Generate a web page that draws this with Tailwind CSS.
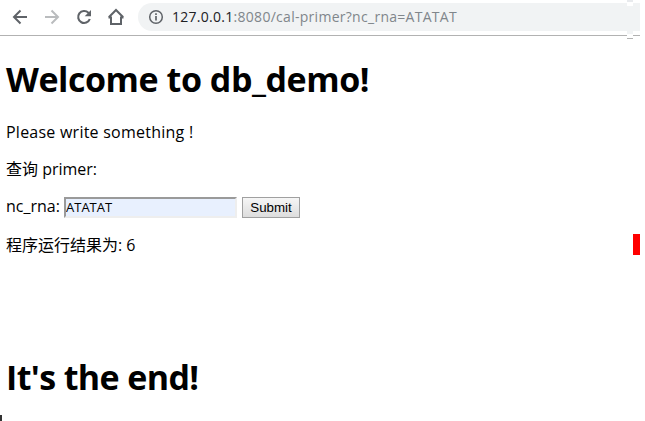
<!DOCTYPE html>
<html lang="zh">
<head>
<meta charset="utf-8">
<title>db_demo</title>
<script src="https://cdn.jsdelivr.net/npm/@tailwindcss/browser@4"></script>
</head>
<body class="relative flex h-[421px] w-[645px] flex-col overflow-hidden bg-white font-['Open_Sans','Noto_Sans_CJK_SC',sans-serif] text-base text-black">
<header class="flex h-9 w-[640px] shrink-0 items-start border-b border-[#b2b2b2] pt-[3px]">
  <nav class="flex h-7 w-[138px] shrink-0 items-center gap-3 pl-[10px] text-[#5f6368]">
    <svg class="size-5" viewBox="0 0 20 20" fill="none" stroke="currentColor" stroke-width="2"><path d="M17 10H4.5M10.5 3.5L4 10l6.500 6.500"/></svg>
    <svg class="size-5 text-[#babcbe]" viewBox="0 0 20 20" fill="none" stroke="currentColor" stroke-width="2"><path d="M3 10h12.500M9.500 3.500L16 10l-6.500 6.500"/></svg>
    <svg class="size-5" viewBox="0 0 20 20" fill="none" stroke="currentColor" stroke-width="2.100"><path d="M15.800 12A6 6 0 1 1 14.400 5.700L15.500 7"/><path d="M17 3v6.300h-6.300z" fill="currentColor" stroke="none"/></svg>
    <svg class="size-5" viewBox="0 0 20 20" fill="none" stroke="currentColor" stroke-width="2"><path d="M2.800 10.200L10 3l7.200 7.200M2.500 10.500H5V17h10v-6.500h2.500"/></svg>
  </nav>
  <div class="flex h-7 flex-1 items-center rounded-l-full bg-[#f1f3f4] pl-[10px]">
    <svg class="mr-[8px] size-4" viewBox="0 0 16 16" fill="none" stroke="#5f6368" stroke-width="1.500"><circle cx="8" cy="8" r="6.300"/><path d="M8 7v4.500M8 4.300v1.700" stroke-width="1.700"/></svg>
    <span class="whitespace-nowrap text-[14px] leading-7 tracking-[0.28px] text-[#80868b]"><span class="text-[#202124]">127.0.0.1</span>:8080/cal-primer?nc_rna=ATATAT</span>
  </div>
</header>
<main class="flex flex-col pl-[6px]">
  <h1 class="mt-[19px] h-12 whitespace-nowrap text-[34px] leading-[48px] font-bold tracking-[-0.45px]">Welcome to db_demo!</h1>
  <p class="mt-[18px] h-[22px] whitespace-nowrap leading-[22px] tracking-[0.24px]">Please write something !</p>
  <p class="mt-[15px] h-[22px] whitespace-nowrap leading-[22px]">查询 primer:</p>
  <form class="mt-[16px] flex h-[22px] items-center">
    <label for="rna" class="w-[58px] whitespace-nowrap pb-px leading-[21px]">nc_rna:</label>
    <input id="rna" name="nc_rna" value="ATATAT" class="h-[21px] w-[173px] border-2 border-t-[#9a9a9a] border-r-[#eeeeee] border-b-[#eeeeee] border-l-[#9a9a9a] bg-[#e8f0fe] font-['Open_Sans',sans-serif] text-[13px] leading-4">
    <button type="button" class="ml-[5px] h-[21px] w-[58px] border border-[#a0a0a0] bg-linear-to-b from-[#f6f6f6] to-[#dddddd] pt-px font-['Liberation_Sans',sans-serif] text-[13.333px] leading-4">Submit</button>
  </form>
  <p class="mt-[16px] h-[22px] whitespace-nowrap leading-[22px]">程序运行结果为: 6</p>
  <h1 class="mt-[97px] h-12 whitespace-nowrap text-[34px] leading-[48px] font-bold tracking-[-0.62px]">It's the end!</h1>
</main>
<div class="absolute top-0 left-[627px] flex h-[39px] w-[6px] flex-col">
  <i class="h-[2px] bg-[#e8eaed]"></i><i class="h-[4px] bg-white"></i><i class="h-[28px] bg-[#f1f3f4]"></i><i class="h-[4px] bg-white"></i><i class="h-px bg-[#b2b2b2]"></i>
</div>
<div class="absolute top-[234px] left-[633px] h-[21px] w-[7px] bg-[#ff0000]"></div>
<div class="absolute top-[415px] left-0 h-[6px] w-[2px] bg-[#333333]"></div>
</body>
</html>
